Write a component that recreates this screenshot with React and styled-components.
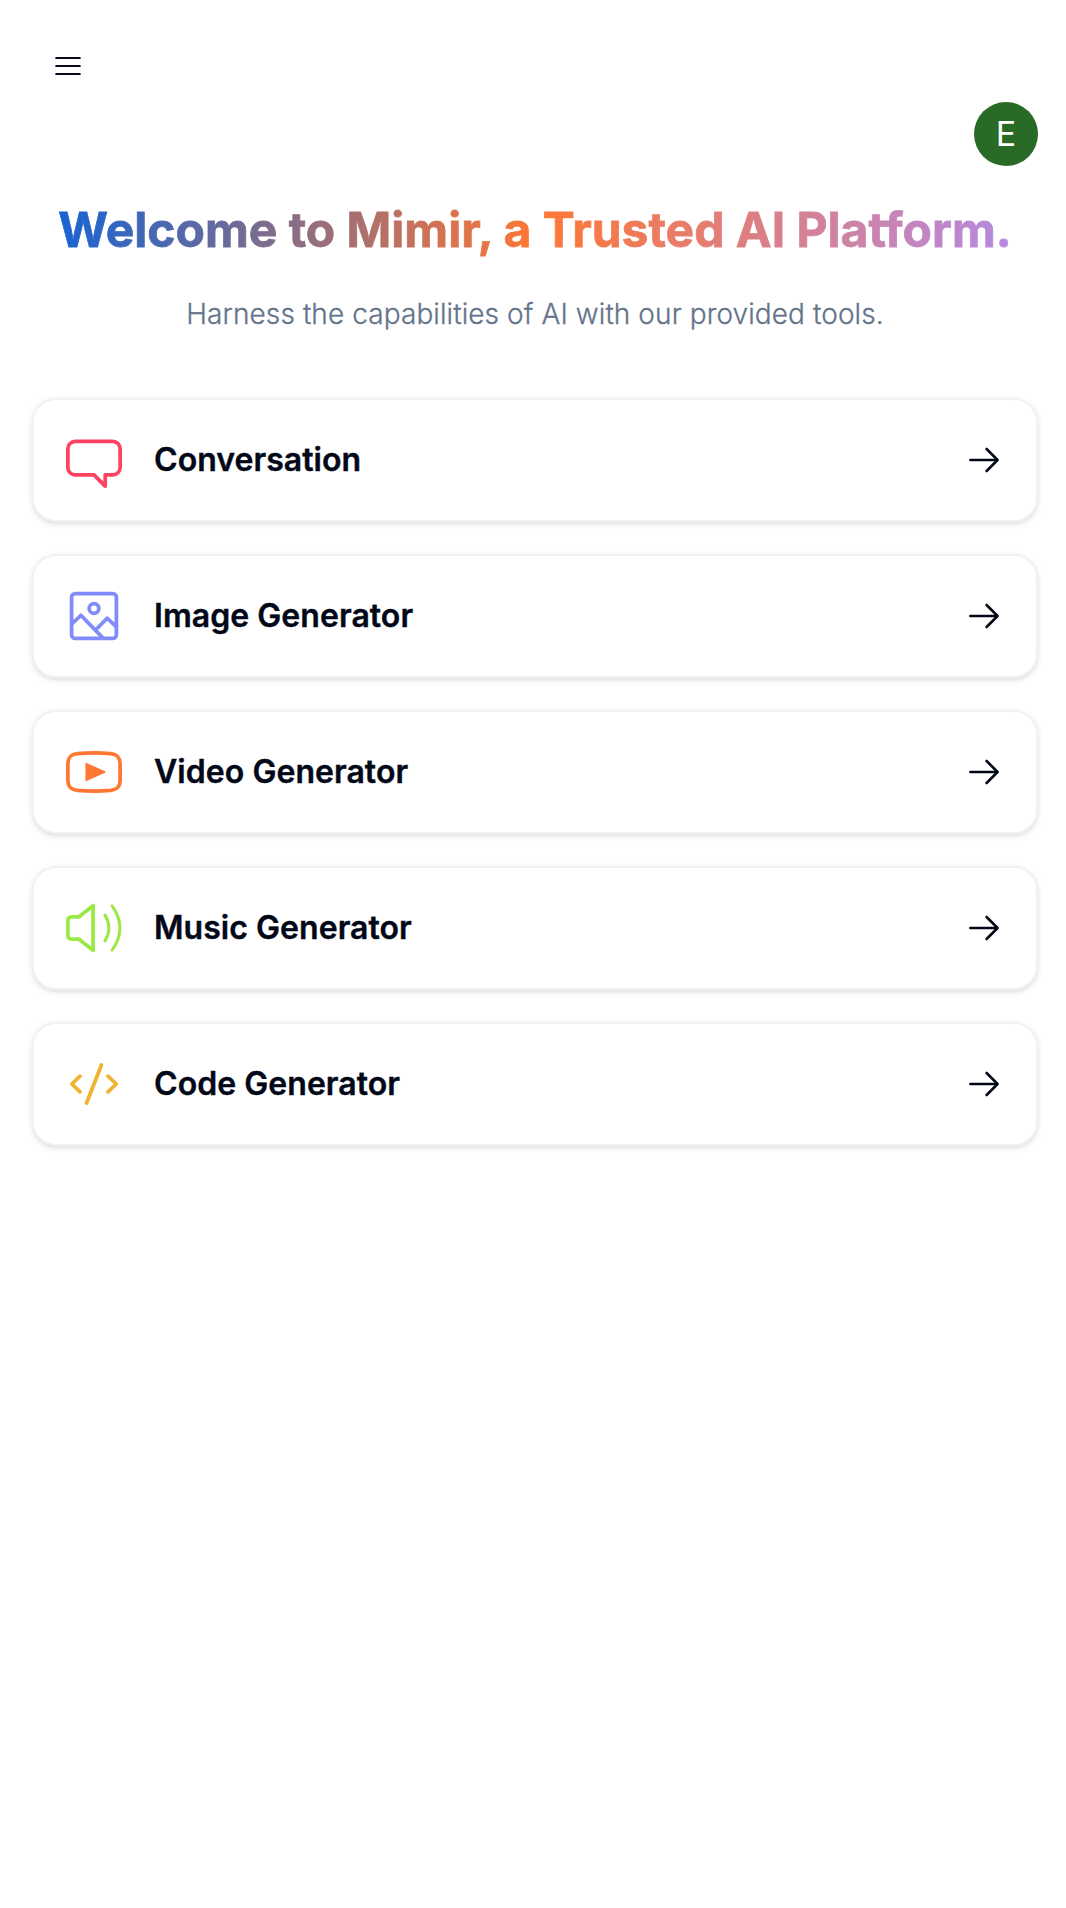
import React from "react";
import styled, { createGlobalStyle } from "styled-components";

const GlobalStyle = createGlobalStyle`
  *, *::before, *::after { box-sizing: border-box; }
  body {
    margin: 0;
    background: #ffffff;
    color: #020817;
    font-family: Inter, "Liberation Sans", sans-serif;
  }
`;

const Page = styled.div`
  min-height: 1908px;
  padding: 46px 28px 0 32px;
`;

const Navbar = styled.header`
  display: flex;
  flex-direction: column;
`;

const MenuButton = styled.button`
  display: flex;
  align-self: flex-start;
  margin-left: 20px;
  padding: 0;
  border: 0;
  background: none;
  color: inherit;
`;

const Avatar = styled.div`
  display: flex;
  align-items: center;
  justify-content: center;
  align-self: flex-end;
  width: 64px;
  height: 64px;
  margin-top: 16px;
  border-radius: 50%;
  background: #286a26;
  color: #ffffff;
  font-size: 34px;
  font-weight: 400;
  line-height: 1;
`;

const Intro = styled.section`
  display: flex;
  flex-direction: column;
  gap: 32px;
  margin: 32px 0 64px;
  text-align: center;
  white-space: nowrap;
`;

const Title = styled.h1`
  margin: 0;
  background: linear-gradient(to right, #0b62dc, #ff7733, #b08aec);
  background-clip: text;
  -webkit-background-clip: text;
  -webkit-text-stroke: 0.8px transparent;
  color: transparent;
  font-size: 48px;
  font-weight: 700;
  line-height: 64px;
`;

const Subtitle = styled.p`
  margin: 0;
  color: #64748b;
  -webkit-text-stroke: 0.3px currentColor;
  font-size: 28px;
  font-weight: 300;
  letter-spacing: 0.09px;
  line-height: 40px;
`;

const ToolList = styled.nav`
  display: flex;
  flex-direction: column;
  gap: 32px;
`;

const ToolCard = styled.a`
  display: flex;
  align-items: center;
  justify-content: space-between;
  height: 124px;
  padding: 0 32px;
  border: 2px solid rgba(0, 0, 0, 0.05);
  border-radius: 24px;
  background: #ffffff;
  box-shadow: 0 2px 6px rgba(0, 0, 0, 0.1), 0 2px 4px -2px rgba(0, 0, 0, 0.1);
`;

const ToolInfo = styled.div`
  display: flex;
  align-items: center;
  gap: 32px;
`;

const ToolName = styled.span`
  -webkit-text-stroke: 0.4px currentColor;
  font-size: 32px;
  font-weight: 600;
  letter-spacing: 0.05px;
  line-height: 48px;
`;

const ToolIcon = styled.svg`
  display: block;
  width: 56px;
  height: 56px;
  color: ${(p) => p.$color};
  fill: none;
  stroke: currentColor;
  stroke-linecap: round;
  stroke-linejoin: round;
`;

const LineIcon = styled.svg`
  display: block;
  width: 40px;
  height: 40px;
  fill: none;
  stroke: currentColor;
`;

const tools = [
  {
    label: "Conversation",
    color: "#ff4262",
    icon: (
      <path d="M7.5 11.5l3 3v-3h2a2 2 0 002-2v-5a2 2 0 00-2-2h-10a2 2 0 00-2 2v5a2 2 0 002 2h5z" />
    ),
  },
  {
    label: "Image Generator",
    color: "#818cf8",
    icon: (
      <>
        <rect x="1.5" y="1.5" width="12" height="12" rx="1" />
        <circle cx="7.5" cy="5.5" r="1.3" />
        <path d="M1.5 9.7L4 7.3l5.8 6M8.2 11L11 8.1l2.5 2.3" />
      </>
    ),
  },
  {
    label: "Video Generator",
    color: "#ff7733",
    icon: (
      <>
        <path d="M.5 5.4C.5 3.5 1.3 2.8 3 2.6Q7.5 2.2 12 2.6C13.7 2.8 14.5 3.5 14.5 5.4V9.6C14.5 11.5 13.7 12.2 12 12.4Q7.5 12.8 3 12.4C1.3 12.2.5 11.5.5 9.6Z" />
        <path d="M5.4 5.25V9.75L10.4 7.5Z" fill="currentColor" strokeWidth="0.4" />
      </>
    ),
  },
  {
    label: "Music Generator",
    color: "#9ae945",
    icon: (
      <>
        <path d="M1.5 4.5h2l3.75-3v12l-3.75-3h-2a1 1 0 01-1-1v-4a1 1 0 011-1z" />
        <path d="M10.45 4.05q2.1 3.45 0 6.9M12.35 1.55q4.2 5.95 0 11.9" strokeWidth="0.8" />
      </>
    ),
  },
  {
    label: "Code Generator",
    color: "#f0b32f",
    icon: (
      <path d="M3.75 5.4L1.55 7.5l2.2 2.1M11.25 5.4l2.2 2.1-2.2 2.1M9.5 2.4L5.5 12.6" strokeWidth="1" />
    ),
  },
];

export default function App() {
  return (
    <>
      <GlobalStyle />
      <Page>
        <Navbar>
          <MenuButton aria-label="Open menu">
            <LineIcon viewBox="0 0 40 40" strokeWidth="2">
              <path d="M3.4 12h25.2M3.4 20h25.2M3.4 28h25.2" />
            </LineIcon>
          </MenuButton>
          <Avatar>E</Avatar>
        </Navbar>
        <Intro>
          <Title>Welcome to Mimir, a Trusted AI Platform.</Title>
          <Subtitle>Harness the capabilities of AI with our provided tools.</Subtitle>
        </Intro>
        <ToolList>
          {tools.map((tool) => (
            <ToolCard key={tool.label}>
              <ToolInfo>
                <ToolIcon viewBox="0 0 15 15" $color={tool.color}>
                  {tool.icon}
                </ToolIcon>
                <ToolName>{tool.label}</ToolName>
              </ToolInfo>
              <LineIcon viewBox="0 0 40 40" strokeWidth="2.6" strokeLinecap="round" strokeLinejoin="round">
                <path d="M6.4 20h27M22.6 9l11 11-11 11" />
              </LineIcon>
            </ToolCard>
          ))}
        </ToolList>
      </Page>
    </>
  );
}
